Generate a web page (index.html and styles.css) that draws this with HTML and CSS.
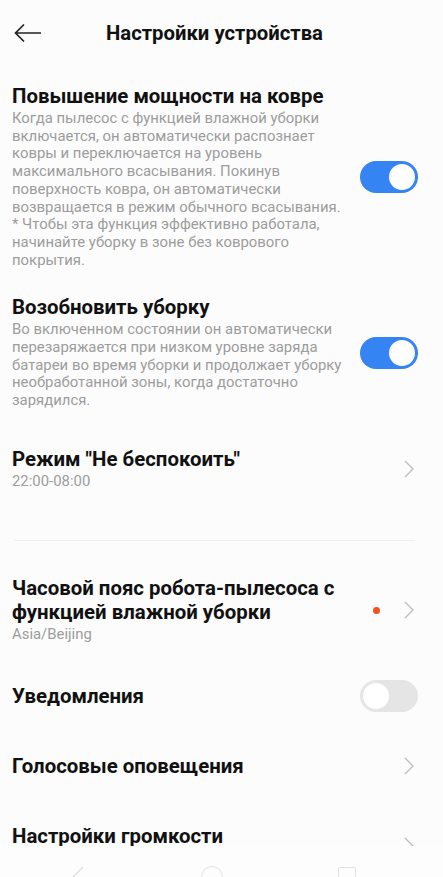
FILE: index.html
```html
<!DOCTYPE html>
<html lang="ru">
<head>
    <meta charset="UTF-8">
    <meta name="viewport" content="width=device-width, initial-scale=1.0">
    <title>Настройки устройства</title>
    <link rel="stylesheet" href="styles.css">
</head>
<body>
    <div class="header">
        <button class="back-btn" aria-label="Назад">
            <svg width="28" height="20" viewBox="0 0 28 20">
                <path d="M27 10H2M10 1.5L1.5 10L10 18.5" fill="none" stroke="#222" stroke-width="1.7"/>
            </svg>
        </button>
        <h1 class="header-title">Настройки устройства</h1>
    </div>

    <div class="settings">
        <div class="item item-desc">
            <div class="item-text">
                <div class="item-title">Повышение мощности на ковре</div>
                <p class="item-note">Когда пылесос с функцией влажной уборки включается, он автоматически распознает ковры и переключается на уровень максимального всасывания. Покинув поверхность ковра, он автоматически возвращается в режим обычного всасывания. * Чтобы эта функция эффективно работала, начинайте уборку в зоне без коврового покрытия.</p>
            </div>
            <div class="switch on"><span class="knob"></span></div>
        </div>

        <div class="item item-desc">
            <div class="item-text">
                <div class="item-title">Возобновить уборку</div>
                <p class="item-note">Во включенном состоянии он автоматически перезаряжается при низком уровне заряда батареи во время уборки и продолжает уборку необработанной зоны, когда достаточно зарядился.</p>
            </div>
            <div class="switch on"><span class="knob"></span></div>
        </div>

        <div class="item item-value">
            <div class="item-text">
                <div class="item-title">Режим "Не беспокоить"</div>
                <div class="item-sub">22:00-08:00</div>
            </div>
            <svg class="chevron" width="10" height="18" viewBox="0 0 10 18"><path d="M1 1L9 9L1 17" fill="none" stroke="#bdbdbd" stroke-width="1.3"/></svg>
        </div>

        <div class="divider"></div>

        <div class="item item-zone">
            <div class="item-text">
                <div class="item-title">Часовой пояс робота-пылесоса с функцией влажной уборки</div>
                <div class="item-sub">Asia/Beijing</div>
            </div>
            <span class="dot"></span>
            <svg class="chevron" width="10" height="18" viewBox="0 0 10 18"><path d="M1 1L9 9L1 17" fill="none" stroke="#bdbdbd" stroke-width="1.3"/></svg>
        </div>

        <div class="item item-plain">
            <div class="item-text">
                <div class="item-title">Уведомления</div>
            </div>
            <div class="switch"><span class="knob"></span></div>
        </div>

        <div class="item item-plain">
            <div class="item-text">
                <div class="item-title">Голосовые оповещения</div>
            </div>
            <svg class="chevron" width="10" height="18" viewBox="0 0 10 18"><path d="M1 1L9 9L1 17" fill="none" stroke="#bdbdbd" stroke-width="1.3"/></svg>
        </div>

        <div class="item item-plain">
            <div class="item-text">
                <div class="item-title">Настройки громкости</div>
            </div>
            <svg class="chevron chevron-low" width="10" height="18" viewBox="0 0 10 18"><path d="M1 1L9 9L1 17" fill="none" stroke="#bdbdbd" stroke-width="1.3"/></svg>
        </div>
    </div>

    <div class="navbar">
        <svg class="nav-icon" width="14" height="22" viewBox="0 0 14 22"><path d="M12 1L2 11L12 21" fill="none" stroke="#e2e2e2" stroke-width="1.5"/></svg>
        <span class="nav-home"></span>
        <span class="nav-recent"></span>
    </div>
</body>
</html>
```

FILE: styles.css
```css
body {
    margin: 0;
    font-family: Roboto, "Noto Sans", "Liberation Sans", sans-serif;
    background-color: #fcfcfc;
    color: #111;
}
.header {
    display: flex;
    align-items: center;
    height: 66px;
    padding: 0 14px;
    position: relative;
}
.back-btn {
    background: none;
    border: none;
    padding: 0;
    display: flex;
    cursor: pointer;
}
.header-title {
    flex: 1;
    margin: 0 42px 0 0;
    text-align: center;
    font-size: 20.3px;
    font-weight: 700;
    color: #111;
}
.settings {
    padding: 5px 25px 0 12px;
}
.item {
    display: flex;
    align-items: center;
    gap: 18px;
}
.item-desc {
    padding: 13px 0;
}
.item-value {
    padding: 24px 0;
}
.item-zone {
    padding: 16px 0;
}
.item-plain {
    min-height: 70px;
}
.item-text {
    flex: 1;
}
.item-title {
    font-size: 20.4px;
    font-weight: 700;
    line-height: 24px;
}
.item-note {
    margin: 2px 0 0;
    font-size: 14.9px;
    line-height: 17.7px;
    color: #9d9d9d;
}
.item-sub {
    font-size: 14.9px;
    line-height: 21px;
    color: #9d9d9d;
}
.switch {
    width: 58px;
    height: 32px;
    border-radius: 16px;
    background-color: #e5e5e5;
    display: flex;
    align-items: center;
    padding: 0 3px;
    box-sizing: border-box;
    flex-shrink: 0;
}
.switch.on {
    background-color: #3683f4;
    justify-content: flex-end;
}
.knob {
    width: 26px;
    height: 26px;
    border-radius: 50%;
    background-color: #fff;
}
.chevron {
    flex-shrink: 0;
    margin-right: 4px;
}
.chevron-low {
    margin-top: 20px;
}
.dot {
    width: 7px;
    height: 7px;
    border-radius: 50%;
    background-color: #f4511e;
    margin-right: 6px;
    flex-shrink: 0;
}
.divider {
    height: 1px;
    background-color: #f1f1f1;
    margin: 24px 3px 19px 2px;
}
.navbar {
    position: fixed;
    left: 0;
    right: 0;
    bottom: -30px;
    height: 61px;
    background-color: #fdfdfd;
    display: flex;
    justify-content: space-between;
    align-items: center;
    padding: 0 87px 0 71px;
}
.nav-home {
    width: 20px;
    height: 20px;
    border: 1.5px solid #e2e2e2;
    border-radius: 50%;
}
.nav-recent {
    width: 16px;
    height: 18px;
    border: 1.5px solid #e2e2e2;
    border-radius: 2px;
}
```
